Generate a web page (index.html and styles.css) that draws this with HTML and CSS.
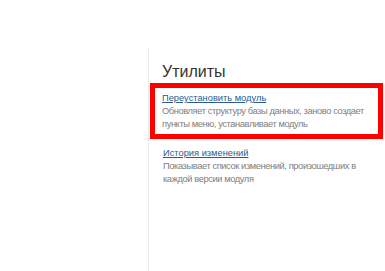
FILE: index.html
```html
<!DOCTYPE html>
<html lang="ru">
<head>
    <meta charset="UTF-8">
    <title>Утилиты</title>
    <link rel="stylesheet" href="styles.css">
</head>
<body>
    <div class="page">
        <div class="sidebar"></div>
        <div class="content">
            <h2>Утилиты</h2>

            <div class="util-item highlighted">
                <a href="#">Переустановить модуль</a>
                <p>Обновляет структуру базы данных, заново создает пункты меню, устанавливает модуль</p>
            </div>

            <div class="util-item">
                <a href="#">История изменений</a>
                <p>Показывает список изменений, произошедших в каждой версии модуля</p>
            </div>
        </div>
    </div>
</body>
</html>
```

FILE: styles.css
```css
body {
    margin: 0;
    background: #fff;
    font-family: "Liberation Sans", Arial, sans-serif;
}

.page {
    display: flex;
    height: 271px;
    padding-top: 48px;
    box-sizing: border-box;
}

.sidebar {
    width: 148px;
    flex-shrink: 0;
}

.content {
    flex: 1;
    border-left: 1px solid #ececec;
}

.content h2 {
    margin: 14px 0 0 13px;
    font-size: 16px;
    font-weight: normal;
    line-height: 20px;
    color: #333;
}

.util-item {
    margin: 4px 2px 0 1px;
    padding: 4px 0 3px 13px;
    font-size: 9.3px;
    line-height: 13px;
}

.util-item.highlighted {
    margin-top: 1px;
    border: 5px solid #f00;
    padding-left: 7px;
}

.util-item a {
    display: inline-block;
    color: #2a5c8f;
    text-decoration: underline;
    line-height: 11px;
    margin-bottom: 1px;
}

.util-item p {
    margin: 0;
    color: #808080;
    letter-spacing: -0.4px;
}
```
